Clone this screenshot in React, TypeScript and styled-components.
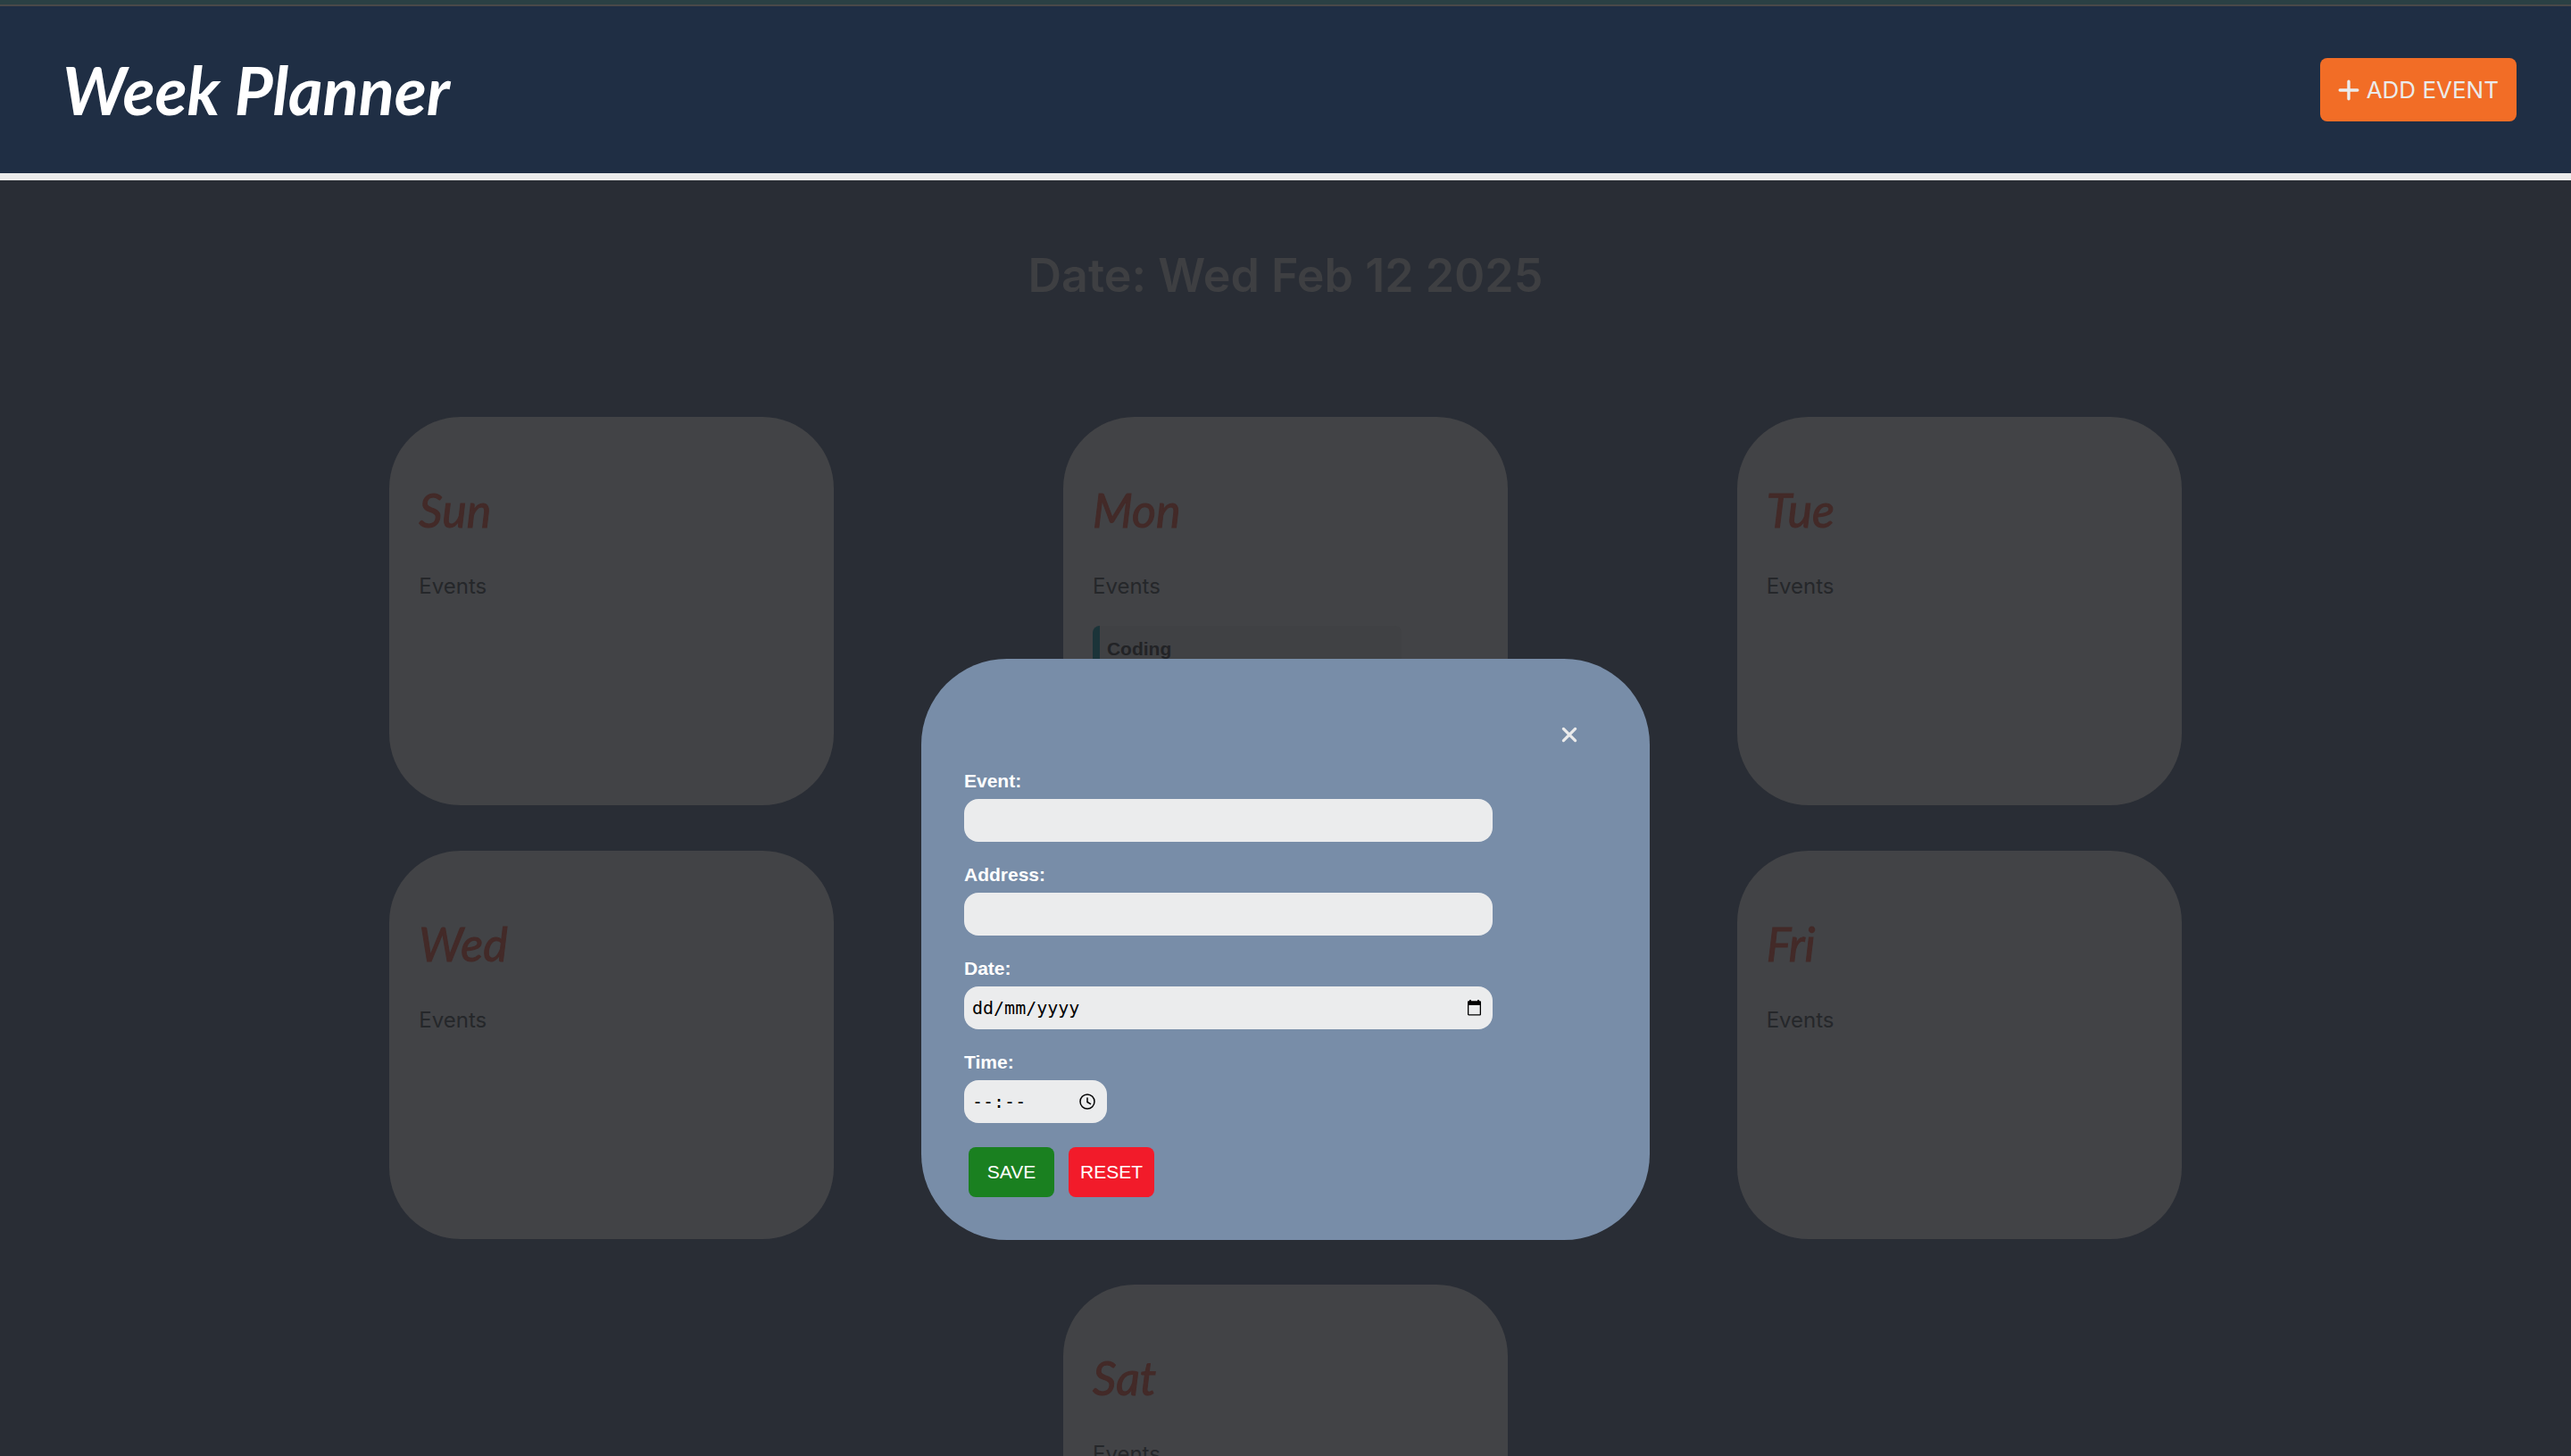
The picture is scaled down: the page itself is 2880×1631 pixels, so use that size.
import React from "react";
import styled, { createGlobalStyle } from "styled-components";

const display = `Inter, "Noto Sans", sans-serif`;
const script = `Lato, "Open Sans", sans-serif`;
const body = `"Liberation Sans", Arial, sans-serif`;
const mono = `"DejaVu Sans Mono", "Liberation Mono", monospace`;

const GlobalStyle = createGlobalStyle`
  *, *::before, *::after { box-sizing: border-box; }
  body { margin: 0; background: #292d35; font-family: ${body}; }
  h1, h2, h3, p, ul { margin: 0; padding: 0; }
  button, input { font: inherit; border: 0; margin: 0; }
`;

const Page = styled.div`
  height: 100vh;
  overflow: hidden;
`;

const TopStrip = styled.div`
  height: 7px;
  background: #2a4044;
  border-bottom: 2px solid #494949;
`;

const Header = styled.header`
  display: flex;
  align-items: center;
  justify-content: space-between;
  height: 195px;
  padding: 0 61px 0 70px;
  background: #1f2e44;
  border-bottom: 8px solid #ebebeb;
`;

const Brand = styled.h1`
  color: #fff;
  font: italic 700 74px/88px ${script};
`;

const AddButton = styled.button`
  display: flex;
  align-items: center;
  gap: 8px;
  height: 71px;
  padding: 0 20px;
  border-radius: 8px;
  background: #f26d26;
  color: #ebebeb;
  font: 400 26px/32px ${display};
`;

const Today = styled.h2`
  padding: 77px 0 128px;
  color: #3e3f42;
  font: 600 52px/60px ${display};
  text-align: center;
`;

const Week = styled.main`
  display: grid;
  grid-template-columns: repeat(3, 1fr);
  row-gap: 51px;
  padding: 0 308px;
`;

const DayCard = styled.section`
  justify-self: center;
  width: 66%;
  height: 435px;
  padding: 74px 33px 0;
  border-radius: 80px;
  background: #424346;

  &:last-child {
    grid-column: 2;
  }
`;

const DayName = styled.h3`
  margin-bottom: 41px;
  color: #432a28;
  font: italic 400 52px/60px ${script};
  -webkit-text-stroke: 1px #432a28;
`;

const EventsTitle = styled.p`
  color: #25272a;
  font: 400 24px/30px ${display};
`;

const EventItem = styled.li`
  width: 80%;
  margin-top: 29px;
  padding: 14px 8px;
  border-left: 8px solid #1b3439;
  border-radius: 8px;
  background: #404144;
  color: #222326;
  font-size: 21px;
  font-weight: 700;
  line-height: 24px;
  list-style: none;
`;

const Dialog = styled.div`
  position: fixed;
  top: 738px;
  left: 50%;
  width: 816px;
  padding: 48px;
  border-radius: 96px;
  background: #788da8;
  transform: translateX(-50%);
`;

const DialogTop = styled.div`
  display: flex;
  justify-content: flex-end;
  padding: 17px 22px 20px 0;
`;

const CloseButton = styled.button`
  display: grid;
  place-items: center;
  width: 40px;
  height: 40px;
  padding: 0;
  background: none;
  color: #ebebeb;
`;

const Form = styled.form`
  display: grid;
  gap: 25px;
`;

const Field = styled.div`
  display: grid;
  gap: 8px;
`;

const Label = styled.label`
  color: #fff;
  font-size: 21px;
  font-weight: 700;
  line-height: 24px;
`;

const InputBox = styled.div<{ $short?: boolean }>`
  display: flex;
  align-items: center;
  width: ${(p) => (p.$short ? "160px" : "592px")};
  height: 48px;
  padding: 0 13px 0 9px;
  border-radius: 16px;
  background: #ebeced;
  color: #000;
`;

const Input = styled.input`
  flex: 1;
  min-width: 0;
  height: 100%;
  padding: 0;
  outline: 0;
  background: none;
  color: #000;
  font: 400 20px/24px ${mono};

  &::placeholder {
    color: #000;
    opacity: 1;
  }
`;

const Actions = styled.div`
  display: flex;
  gap: 16px;
  padding: 2px 0 0 5px;
`;

const ActionButton = styled.button<{ $color: string }>`
  width: 96px;
  height: 56px;
  padding: 0;
  border-radius: 8px;
  background: ${(p) => p.$color};
  color: #fff;
  font-size: 21px;
  line-height: 24px;
`;

const PlusIcon = () => (
  <svg width="24" height="24" viewBox="0 0 24 24" stroke="currentColor" strokeWidth="3.4" strokeLinecap="round" aria-hidden="true">
    <path d="M12 2.2v19.6M2.2 12h19.6" />
  </svg>
);

const CloseIcon = () => (
  <svg width="18" height="18" viewBox="0 0 18 18" stroke="currentColor" strokeWidth="3.2" strokeLinecap="round" aria-hidden="true">
    <path d="M2.4 2.4l13.2 13.2M15.6 2.4L2.4 15.6" />
  </svg>
);

const CalendarIcon = () => (
  <svg width="15" height="18" viewBox="0 0 15 18" aria-hidden="true">
    <path d="M2 0h2v2H2zM11 0h2v2h-2zM1 1.5h13a1 1 0 0 1 1 1V6H0V2.5a1 1 0 0 1 1-1z" />
    <rect x=".65" y="2.2" width="13.7" height="14.6" rx=".6" fill="none" stroke="#000" strokeWidth="1.3" />
  </svg>
);

const ClockIcon = () => (
  <svg width="18" height="18" viewBox="0 0 18 18" fill="none" stroke="#000" strokeWidth="1.5" aria-hidden="true">
    <circle cx="9" cy="9" r="8" />
    <path d="M9 4.5V9.5l4 2.4" />
  </svg>
);

const week: { name: string; events: string[] }[] = [
  { name: "Sun", events: [] },
  { name: "Mon", events: ["Coding"] },
  { name: "Tue", events: [] },
  { name: "Wed", events: [] },
  { name: "Thu", events: [] },
  { name: "Fri", events: [] },
  { name: "Sat", events: [] },
];

type FieldProps = {
  id: string;
  label: string;
  placeholder?: string;
  short?: boolean;
  icon?: React.ReactNode;
};

const FormField = ({ id, label, placeholder, short, icon }: FieldProps) => (
  <Field>
    <Label htmlFor={id}>{label}</Label>
    <InputBox $short={short}>
      <Input id={id} type="text" placeholder={placeholder} />
      {icon}
    </InputBox>
  </Field>
);

export default function App() {
  return (
    <Page>
      <GlobalStyle />
      <TopStrip />
      <Header>
        <Brand>Week Planner</Brand>
        <AddButton type="button">
          <PlusIcon />
          ADD EVENT
        </AddButton>
      </Header>
      <Today>Date: Wed Feb 12 2025</Today>
      <Week>
        {week.map((day) => (
          <DayCard key={day.name}>
            <DayName>{day.name}</DayName>
            <EventsTitle>Events</EventsTitle>
            {day.events.length > 0 && (
              <ul>
                {day.events.map((event) => (
                  <EventItem key={event}>{event}</EventItem>
                ))}
              </ul>
            )}
          </DayCard>
        ))}
      </Week>
      <Dialog role="dialog" aria-label="Add event">
        <DialogTop>
          <CloseButton type="button" aria-label="Close">
            <CloseIcon />
          </CloseButton>
        </DialogTop>
        <Form onSubmit={(e) => e.preventDefault()}>
          <FormField id="event" label="Event:" />
          <FormField id="address" label="Address:" />
          <FormField id="date" label="Date:" placeholder="dd/mm/yyyy" icon={<CalendarIcon />} />
          <FormField id="time" label="Time:" placeholder="--:--" short icon={<ClockIcon />} />
          <Actions>
            <ActionButton type="submit" $color="#1a8020">SAVE</ActionButton>
            <ActionButton type="reset" $color="#f21b2a">RESET</ActionButton>
          </Actions>
        </Form>
      </Dialog>
    </Page>
  );
}
